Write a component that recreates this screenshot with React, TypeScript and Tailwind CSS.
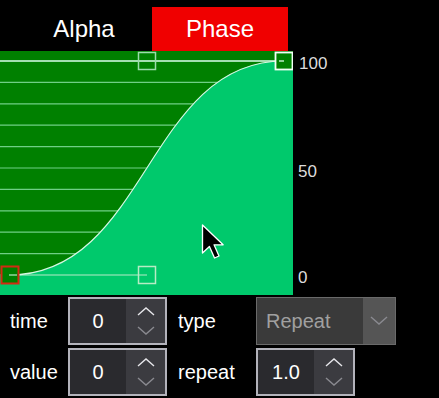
import { ReactNode } from "react";

const FONT = { fontFamily: '"Liberation Sans", Arial, sans-serif' };

// grid lines inside the curve editor, chart coords
const GRID_Y = Array.from({ length: 11 }, (_, i) => 10 + i * 21.4);

function Chevron({ dir, dim }: { dir: "up" | "down"; dim?: boolean }) {
  return (
    <svg width="22" height="12" viewBox="0 0 22 12">
      <polyline
        points={dir === "up" ? "3,10 11,3 19,10" : "3,2 11,9 19,2"}
        fill="none"
        stroke={dim ? "#8a8a90" : "#e6e6ea"}
        strokeWidth="1.4"
      />
    </svg>
  );
}

function Spin({ value }: { value: string }) {
  return (
    <div className="flex h-[48px] w-[99px] border-2 border-[#b3b3bb] bg-[#2a2a2e]">
      <div className="flex w-[56px] items-center justify-center text-[20px] text-white">{value}</div>
      <div className="flex flex-1 flex-col bg-[#3b3b40]">
        <div className="flex flex-1 items-center justify-center pt-[2px]">
          <Chevron dir="up" />
        </div>
        <div className="flex flex-1 items-center justify-center pb-[2px]">
          <Chevron dir="down" dim />
        </div>
      </div>
    </div>
  );
}

function Label({ children, className = "" }: { children: ReactNode; className?: string }) {
  return <div className={`flex items-center text-[20px] text-white ${className}`}>{children}</div>;
}

function CurveEditor() {
  const curve = "M9,224 C147,224 147,10 284,10";
  return (
    <svg width="293" height="244" viewBox="0 0 293 244" className="block">
      <rect x="0" y="0" width="293" height="244" fill="#008000" />
      {GRID_Y.map((y) => (
        <line key={y} x1="0" x2="293" y1={y} y2={y} stroke="#6fcf86" strokeWidth="1.2" />
      ))}
      <path d={`${curve} L293,10 L293,244 L0,244 L0,224 Z`} fill="#00c96c" />
      <line x1="0" x2="284" y1="10" y2="10" stroke="#c8f2d4" strokeWidth="1.4" />
      <line x1="9" x2="147" y1="224" y2="224" stroke="#b8ecc8" strokeWidth="1.2" />
      <path d={curve} fill="none" stroke="#d8f7e2" strokeWidth="1.2" />
      {/* control handles */}
      <rect x="138.5" y="1.5" width="17" height="17" fill="none" stroke="#9bdcab" strokeWidth="1.5" />
      <rect x="138.5" y="215.5" width="17" height="17" fill="none" stroke="#b6ecc4" strokeWidth="1.5" />
      <rect x="275.5" y="1.5" width="17" height="17" fill="#008000" stroke="#f2fff6" strokeWidth="1.8" />
      <line x1="279" x2="284" y1="10" y2="10" stroke="#c8f2d4" strokeWidth="1.4" />
      <rect x="1.5" y="215.5" width="17" height="17" fill="#008000" stroke="#d42a12" strokeWidth="2" />
      <line x1="9" x2="17" y1="224" y2="224" stroke="#b8ecc8" strokeWidth="1.2" />
      {/* mouse pointer */}
      <path
        d="M0,0 L0,17 L4.2,13 L7.3,20 L10,18.8 L7,12 L12.5,12 Z"
        transform="translate(202.5,174) scale(1.65)"
        fill="#000"
        stroke="#fff"
        strokeWidth="0.8"
        strokeLinejoin="round"
      />
    </svg>
  );
}

export default function App() {
  return (
    <div className="h-[398px] w-[439px] overflow-hidden bg-black" style={FONT}>
      <div className="flex pl-[16px] pt-[7px]">
        <div className="flex h-[44px] w-[136px] items-center justify-center text-[24px] text-white">Alpha</div>
        <div className="flex h-[44px] w-[136px] items-center justify-center bg-[#f00000] text-[24px] text-white">
          Phase
        </div>
      </div>

      <div className="flex">
        <CurveEditor />
        <div className="relative h-[244px] flex-1 text-[17px] text-[#dcdcdc]">
          <span className="absolute left-[6px] top-[0px]">100</span>
          <span className="absolute left-[5px] top-[108px]">50</span>
          <span className="absolute left-[5px] top-[214px]">0</span>
        </div>
      </div>

      <div className="grid grid-cols-[58px_99px_89px_140px] gap-y-[3px] pl-[10px] pt-[2px]">
        <Label>time</Label>
        <Spin value="0" />
        <Label className="pl-[11px]">type</Label>
        <div className="flex h-[48px] w-[140px] border border-[#6a6a6a] bg-[#3a3a3a]">
          <div className="flex flex-1 items-center pl-[9px] text-[20px] text-[#a0a0a0]">Repeat</div>
          <div className="flex w-[32px] items-center justify-center bg-[#555555]">
            <Chevron dir="down" dim />
          </div>
        </div>

        <Label>value</Label>
        <Spin value="0" />
        <Label className="pl-[11px]">repeat</Label>
        <Spin value="1.0" />
      </div>
    </div>
  );
}
